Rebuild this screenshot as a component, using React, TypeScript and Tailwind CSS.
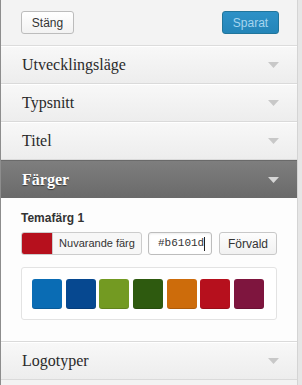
import React from "react";

const serif = { fontFamily: '"Liberation Serif", "Times New Roman", serif' };
const sans = { fontFamily: '"Liberation Sans", Arial, sans-serif' };
const mono = { fontFamily: '"Liberation Mono", "Courier New", monospace' };

function Tri({ dark }: { dark?: boolean }) {
  return (
    <svg width="11" height="6" viewBox="0 0 11 6" className="block">
      <polygon points="0,0 11,0 5.5,6" fill={dark ? "#d6d6d6" : "#c8c8c8"} />
    </svg>
  );
}

function Row({ label }: { label: string }) {
  return (
    <div className="h-[38px] flex items-center justify-between pl-[21px] pr-[18px] border-b border-[#dadada] bg-gradient-to-b from-[#f8f8f8] to-[#ededed] shadow-[inset_0_1px_0_#ffffff]">
      <span className="text-[16px] text-[#2a2a2a] leading-none" style={serif}>
        {label}
      </span>
      <Tri />
    </div>
  );
}

const swatches = ["#0a6cb4", "#064890", "#739a22", "#2e5a0f", "#cd6c0b", "#b6101d", "#7e153e"];

export default function App() {
  return (
    <div className="w-[302px] h-[385px] flex overflow-hidden bg-[#f3f3f3]">
      <div className="w-[1px] bg-[#8d8d8d] shrink-0" />
      <div className="w-[297px] shrink-0 border-r border-[#d4d4d4] flex flex-col bg-[#fdfdfd]">
        <div className="h-[46px] shrink-0 flex items-center justify-between pl-[20px] pr-[18px] border-b border-[#dcdcdc] bg-[#f3f3f3]">
          <button
            className="h-[23px] w-[53px] rounded-[3px] border border-[#bcbcbc] bg-gradient-to-b from-[#ffffff] to-[#f2f2f2] text-[12px] text-[#333] flex items-center justify-center"
            style={sans}
          >
            Stäng
          </button>
          <button
            className="h-[23px] w-[57px] rounded-[3px] border border-[#21759b] bg-gradient-to-b from-[#2d91c7] to-[#2485b8] text-[12px] text-[#a6d5ef] flex items-center justify-center"
            style={sans}
          >
            Sparat
          </button>
        </div>
        <Row label="Utvecklingsläge" />
        <Row label="Typsnitt" />
        <Row label="Titel" />
        <div className="h-[38px] shrink-0 flex items-center justify-between pl-[21px] pr-[18px] bg-gradient-to-b from-[#7e7e7e] to-[#6a6a6a] border-t border-[#6a6a6a]">
          <span
            className="text-[16px] font-bold text-white leading-none [text-shadow:0_1px_1px_rgba(0,0,0,0.5)]"
            style={serif}
          >
            Färger
          </span>
          <Tri dark />
        </div>
        <div className="shrink-0 pl-[20px] pr-[20px] pt-[12px] pb-[21px] border-b border-[#dadada] bg-[#fdfdfd]" style={sans}>
          <div className="text-[12px] font-bold text-[#333] leading-[16px]">Temafärg 1</div>
          <div className="mt-[6px] flex items-center">
            <div className="h-[23px] w-[121px] flex rounded-[3px] border border-[#cccccc] overflow-hidden bg-[#f7f7f7]">
              <div className="w-[31px] h-full bg-[#b6101d] border-r border-[#cccccc]" />
              <div className="flex-1 flex items-center justify-center text-[11px] text-[#333]">Nuvarande färg</div>
            </div>
            <div className="ml-[6px] h-[23px] w-[64px] rounded-[3px] border border-[#bdbdbd] bg-white shadow-[inset_0_1px_2px_rgba(0,0,0,0.08)] flex items-center pl-[9px] text-[11px] text-[#333]" style={mono}>
              #b6101d<span className="inline-block w-[1px] h-[14px] bg-[#222] ml-[0px]" />
            </div>
            <button className="ml-[7px] h-[23px] w-[58px] rounded-[3px] border border-[#c8c8c8] bg-gradient-to-b from-[#fdfdfd] to-[#f1f1f1] text-[12px] text-[#333] flex items-center justify-center">
              Förvald
            </button>
          </div>
          <div className="mt-[12px] w-[256px] h-[53px] rounded-[3px] border border-[#e3e3e3] bg-white pl-[10px] pt-[11px] flex gap-[3.67px]">
            {swatches.map((c) => (
              <div
                key={c}
                className="w-[30px] h-[30px] rounded-[3px] shadow-[inset_0_-1px_0_rgba(0,0,0,0.15)]"
                style={{ backgroundColor: c }}
              />
            ))}
          </div>
        </div>
        <Row label="Logotyper" />
        <div className="flex-1 bg-[#f3f3f3]" />
      </div>
      <div className="flex-1 bg-[#e6e6e6]" />
    </div>
  );
}
